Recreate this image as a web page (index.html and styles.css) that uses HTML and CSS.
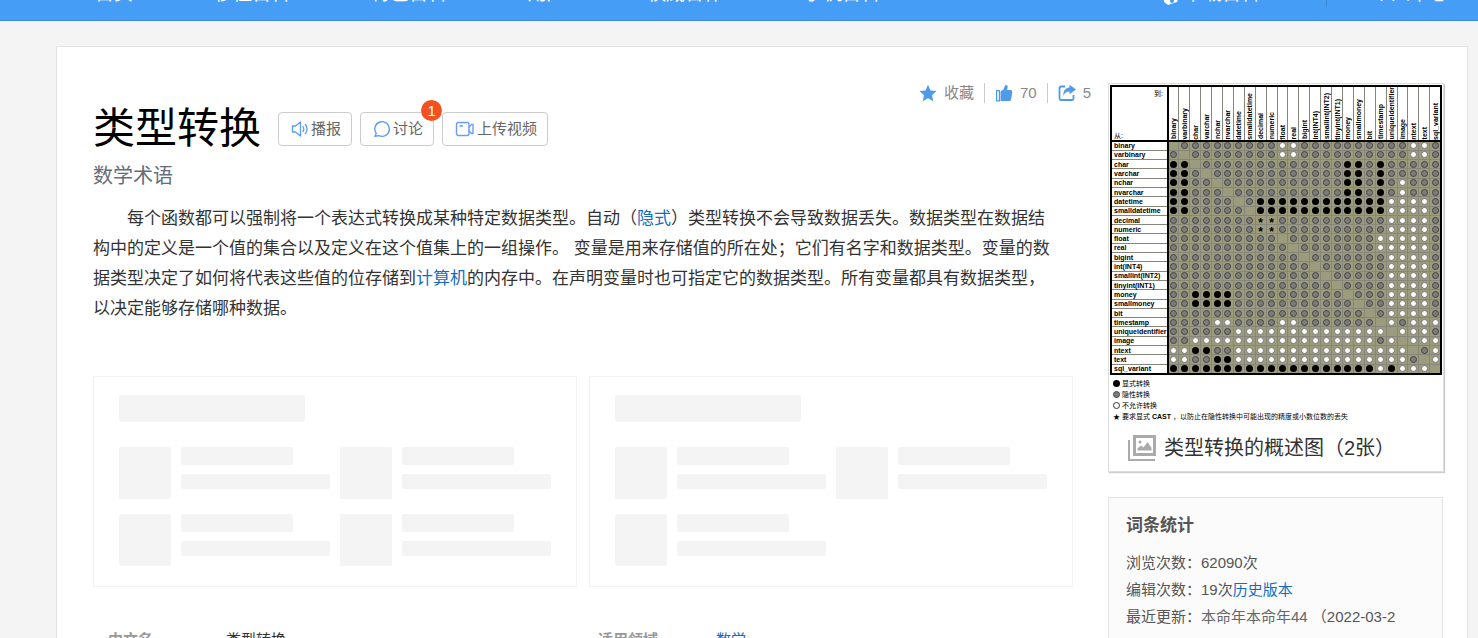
FILE: index.html
```
<!DOCTYPE html>
<html lang="zh-CN">
<head>
  <meta charset="UTF-8">
  <meta name="viewport" content="width=device-width, initial-scale=1.0">
  <title>类型转换</title>

<link rel="stylesheet" href="styles.css">
</head>
<body>

<header class="topbar">
  <nav class="topnav">
    <a href="#">首页</a>
    <a href="#">秒懂百科</a>
    <a href="#">特色百科</a>
    <a href="#">用户</a>
    <a href="#">权威合作</a>
    <a href="#">手机百科</a>
  </nav>
  <div class="topuser">
    <a href="#" class="download">
      <svg width="20" height="20" viewBox="0 0 20 20"><path d="M3 4l9-3 7 10-2 5-9 3-4-3z" fill="#fff"/><circle cx="12" cy="15" r="2" fill="#459df5"/></svg>下载百科</a>
    <a href="#" class="center">个人中心</a>
  </div>
</header>

<div class="page">
  <main class="main">
    <div class="head">
      <div class="title-row">
        <h1>类型转换</h1>
        <button class="btn" type="button">
          <svg width="18" height="18" viewBox="0 0 18 18" fill="none" stroke="#5b9cf8" stroke-width="1.3" stroke-linejoin="round" stroke-linecap="round"><path d="M1.5 6h3L9.500 2v14L4.500 12h-3z"/><path d="M12 6.500q1.600 2.500 0 5M14.500 4.500q3.200 4.500 0 9"/></svg>播报</button>
        <button class="btn" type="button">
          <svg width="18" height="18" viewBox="0 0 18 18" fill="none" stroke="#5b9cf8" stroke-width="1.4" stroke-linejoin="round" stroke-linecap="round"><path d="M2 16.300l1.200-3a7.300 7.300 0 1 1 2.800 2.300z"/></svg>讨论<span class="badge">1</span></button>
        <button class="btn" type="button">
          <svg width="20" height="18" viewBox="0 0 20 18" fill="none" stroke="#6a9dfa" stroke-width="1.4" stroke-linejoin="round" stroke-linecap="round"><rect x="1.500" y="2.500" width="12.500" height="13" rx="2"/><path d="M14 7l2.500-2.500H18v9h-1.500L14 11M5 6h2.500"/></svg>上传视频</button>
      </div>
      <div class="actions">
        <a href="#">
          <svg width="18" height="18" viewBox="0 0 18 18" fill="#4e9bea"><path d="M9 .8l2.500 5.600 6 .7-4.500 4.100 1.300 6L9 14.200l-5.300 3 1.300-6L.5 7.100l6-.7z"/></svg>收藏</a>
        <a href="#">
          <svg width="18" height="18" viewBox="0 0 18 18" fill="#4e9bea"><path d="M5.500 7.500L8.500 5.500 10 1.500q1-1.200 2.400 0 .8 1.500-.4 4.500h3.800q1.800.3 1.500 2l-1.200 7.500q-.5 1.500-2 1.500H5.500z"/><path d="M1.600 6.600h2.800v10.300H1.600z" fill="none" stroke="#4e9bea" stroke-width="1.200"/></svg>70</a>
        <a href="#">
          <svg width="18" height="18" viewBox="0 0 18 18"><path d="M7 2.500H3q-1.500 0-1.500 1.500v10.500q0 1.500 1.500 1.500h11q1.500 0 1.500-1.500V11" fill="none" stroke="#4e9bea" stroke-width="1.800"/><path d="M11.500.8L18 5.500l-6.500 4.800V7.500Q7 7.500 5 12q0-8 6.500-8.500z" fill="#4e9bea"/></svg>5</a>
      </div>
    </div>
    <div class="subtitle">数学术语</div>

    <p class="summary">每个函数都可以强制将一个表达式转换成某种特定数据类型。自动（<a href="#">隐式</a>）类型转换不会导致数据丢失。数据类型在数据结构中的定义是一个值的集合以及定义在这个值集上的一组操作。 变量是用来存储值的所在处；它们有名字和数据类型。变量的数据类型决定了如何将代表这些值的位存储到<a href="#">计算机</a>的内存中。在声明变量时也可指定它的数据类型。所有变量都具有数据类型，以决定能够存储哪种数据。</p>

    <div class="loading">
      <div class="skeleton">
        <div class="sk-title"></div>
        <div class="sk-list">
          <div class="sk-item"><i></i><b></b><b></b></div>
          <div class="sk-item"><i></i><b></b><b></b></div>
          <div class="sk-item"><i></i><b></b><b></b></div>
          <div class="sk-item"><i></i><b></b><b></b></div>
        </div>
      </div>
      <div class="skeleton">
        <div class="sk-title"></div>
        <div class="sk-list">
          <div class="sk-item"><i></i><b></b><b></b></div>
          <div class="sk-item"><i></i><b></b><b></b></div>
          <div class="sk-item"><i></i><b></b><b></b></div>
        </div>
      </div>
    </div>

    <div class="info">
      <dl><dt>中文名</dt><dd>类型转换</dd></dl>
      <dl><dt>适用领域</dt><dd><a href="#">数学</a></dd></dl>
    </div>
  </main>

  <aside class="side">
    <div class="album">
      <table class="matrix">
      <thead>
        <tr id="types">
          <th class="corner"><span class="to">到:</span><span>从:</span></th>
        </tr>
      </thead>
      <tbody id="tbody">
      </tbody>
      </table>
      <ul class="legend">
        <li><span class="dot k"></span>显式转换</li>
        <li><span class="dot g"></span>隐性转换</li>
        <li><span class="dot o"></span>不允许转换</li>
        <li><span class="mark">★</span>要求显式 <b>CAST</b>，以防止在隐性转换中可能出现的精度或小数位数的丢失</li>
      </ul>
      <a href="#" class="album-link">
        <svg width="28" height="26" viewBox="0 0 28 26" fill="none" stroke="#aaa" stroke-width="2"><path d="M1 5v20h26"/><rect x="6.500" y="1.500" width="20" height="18" stroke-width="3"/><path d="M9.500 15.500v-2l3.500-3 2.500 2 4-5.500 4 6v2.500z" fill="#aaa" stroke="none"/><circle cx="12" cy="7" r="1.500" fill="#aaa" stroke="none"/></svg>类型转换的概述图（2张）</a>
    </div>

    <div class="stats">
      <h2>词条统计</h2>
      <ul>
        <li>浏览次数：62090次</li>
        <li>编辑次数：19次<a href="#">历史版本</a></li>
        <li>最近更新：<span>本命年本命年44</span> （2022-03-2</li>
      </ul>
    </div>
  </aside>
</div>

<script src="matrix.js"></script>
</body>
</html>
```

FILE: styles.css
```
body {
  overflow: hidden;
  height: 100vh;

  font-size: 15px;
  font-family: 'Liberation Sans','Noto Sans CJK SC',sans-serif;
  color: #333;
  background-color: #f4f4f4;

  margin: 0px;
}

a { color: #136ec2; text-decoration: none; }
ul { list-style: none; margin: 0px; padding: 0px; }

/* Barra superior */
.topbar {
  display: flex;
  justify-content: space-between;
  align-items: flex-end;
  box-sizing: border-box;
  overflow: hidden;
  height: 21px;
  padding: 0px 30px 14px 95px;
  border-bottom: 1px solid #3d8ee0;
  background-color: #459df5;
}

.topbar a { color: #fff; font-size: 19px; line-height: 24px; white-space: nowrap; }

.topnav { display: flex; gap: 81px; }

.topuser { display: flex; align-items: flex-end; }
.topuser svg { margin-right: 4px; vertical-align: bottom; }
.download { padding-right: 66px; border-right: 1px solid #3a86d3; }
.center { padding-left: 45px; }

/* Página */
.page {
  display: grid;
  grid-template-columns: 1fr 336px;
  gap: 35px;
  margin: 25px 10px 0px 56px;
  padding: 36px 23px 40px 36px;
  border: 1px solid #e3e3e3;
  background-color: #fff;
}

.head { display: flex; justify-content: space-between; align-items: flex-start; margin-right: -18px; }

.title-row { display: flex; align-items: center; gap: 8px; padding-top: 16px; }

h1 {
  margin: 0px 9px 0px 0px;
  font-size: 42px;
  font-weight: 400;
  line-height: 60px;
  color: #000;
}

.btn {
  position: relative;
  display: flex;
  align-items: center;
  gap: 2px;
  height: 34px;
  padding: 0px 10px 0px 12px;
  border: 1px solid #ccc;
  border-radius: 4px;
  background-color: #fff;
  font: inherit;
  line-height: 20px;
  color: #666;
}

.badge {
  position: absolute;
  top: -13px;
  right: -9px;
  width: 21px;
  border-radius: 50%;
  background-color: #f4511e;
  color: #fff;
  line-height: 21px;
}

.actions { display: flex; line-height: 20px; }
.actions a { display: flex; align-items: center; gap: 7px; padding: 0px 10px; color: #888; }
.actions a + a { border-left: 1px solid #ccc; }
.actions a:last-child { padding-right: 0px; }

.subtitle { font-size: 20px; line-height: 34px; color: #666c78; }

.summary {
  margin: 11px 0px 0px;
  padding-right: 16px;
  font-size: 17px;
  line-height: 30px;
  text-indent: 2em;
}

.loading { display: grid; grid-template-columns: 1fr 1fr; gap: 12px; margin-top: 52px; }

.skeleton { padding: 18px 25px 20px; border: 1px solid #f3f3f3; }

.sk-title, .sk-item i, .sk-item b { border-radius: 2px; background-color: #f4f4f4; }
.sk-title { width: 186px; height: 27px; margin-bottom: 25px; }

.sk-list { display: grid; grid-template-columns: 211px 211px; gap: 15px 10px; }
.sk-item { display: grid; grid-template: 18px 15px / 52px 149px; gap: 9px 10px; height: 52px; }
.sk-item i { grid-row: 1 / 3; height: 52px; }
.sk-item b:nth-child(2) { width: 112px; }

.info { display: grid; grid-template-columns: 1fr 1fr; gap: 15px; padding: 40px 0px 0px 15px; line-height: 26px; }
.info dl { display: flex; margin: 0px; }
.info dt { width: 118px; font-weight: 700; color: #999; }
.info dd { margin: 0px; }

/* Álbum */
.album {
  padding: 1px 1px 8px;
  border: 1px solid #ddd;
  box-shadow: 1px 1px 1px #ccc;
}

.matrix {
  width: 100%;
  height: 290px;
  table-layout: fixed;
  border-collapse: collapse;
  border: 2px solid #000;
  font-size: 7px;
  line-height: 7px;
  color: #000;
}

.matrix th, .matrix td { padding: 0px; border: 1px solid #86867a; }
.matrix td { height: 8px; background-color: #9c9c7c; text-align: center; }
.matrix tbody th { padding-left: 2px; border-right: 2px solid #000; text-align: left; white-space: nowrap; }
.matrix thead th { border-bottom: 2px solid #000; vertical-align: bottom; }
.matrix thead th span { display: block; }

.matrix .corner { width: 51px; padding: 1px 2px; border-right: 2px solid #000; text-align: left; font-weight: 400; }
.matrix .corner .to { padding: 0px 2px 35px; text-align: right; }
.matrix .name { margin: 0px auto; writing-mode: vertical-rl; transform: rotate(180deg); white-space: nowrap; }

.dot { display: block; box-sizing: border-box; width: 7px; height: 7px; margin: 0px auto; border-radius: 50%; }
.k { background-color: #000; }
.g { border: 1px solid #444; background-color: #7c7c7c; }
.w { border: 1px solid #777; background-color: #fff; }
.o { border: 1px solid #333; }
.star { display: block; height: 7px; font-size: 12px; line-height: 12px; font-weight: 700; }

.legend { padding: 3px 3px 0px; font-size: 7px; line-height: 11px; color: #000; }
.legend li { display: flex; align-items: center; gap: 2px; white-space: nowrap; }
.legend .dot { margin: 0px; }

.album-link {
  display: flex;
  align-items: center;
  gap: 8px;
  padding: 11px 18px 0px;
  font-size: 20px;
  line-height: 30px;
  color: #333;
  white-space: nowrap;
}

/* Estatísticas */
.stats {
  margin: 25px 1px 0px 0px;
  padding: 14px 17px 40px;
  border: 1px solid #e3e3e3;
  background-color: #fbfbfb;
  color: #555;
}

.stats h2 { margin: 0px 0px 10px; font-size: 17px; line-height: 27px; }
.stats li { line-height: 27px; white-space: nowrap; }
.stats li span { color: #666; }
```

FILE: matrix.js
```
// k = explícita, g = implícita, w = não permitida, s = exige CAST
const tipos = [
  ['binary',           '.gggggggggwwggggggggggwwg'],
  ['varbinary',        'g.ggggggggwwggggggggggwwg'],
  ['char',             'kk.gggggggggggggkkgkggggg'],
  ['varchar',          'kkg.ggggggggggggkkgkggggg'],
  ['nchar',            'kkgg.gggggggggggkkgkgwggg'],
  ['nvarchar',         'kkggg.ggggggggggkkgkgwggg'],
  ['datetime',         'kkgggg.gkkkkkkkkkkkkwwwwg'],
  ['smalldatetime',    'kkggggg.kkkkkkkkkkkkwwwwg'],
  ['decimal',          'ggggggggssggggggggggwwwwg'],
  ['numeric',          'ggggggggssggggggggggwwwwg'],
  ['float',            'gggggggggg.ggggggggwwwwwg'],
  ['real',             'ggggggggggg.gggggggwwwwwg'],
  ['bigint',           'gggggggggggg.gggggggwwwwg'],
  ['int(INT4)',        'ggggggggggggg.ggggggwwwwg'],
  ['smallint(INT2)',   'gggggggggggggg.gggggwwwwg'],
  ['tinyint(INT1)',    'ggggggggggggggg.ggggwwwwg'],
  ['money',            'ggkkkkgggggggggg.gggwwwwg'],
  ['smallmoney',       'ggkkkkggggggggggg.ggwwwwg'],
  ['bit',              'gggggggggggggggggg.gwwwwg'],
  ['timestamp',        'ggggwwggggwwggggggg.wgwww'],
  ['uniqueidentifier', 'ggggggwwwwwwwwwwwwww.wwwg'],
  ['image',            'ggwwwwwwwwwwwwwwwwwgw.www'],
  ['ntext',            'wwkkggwwwwwwwwwwwwwwww.gw'],
  ['text',             'wwggkkwwwwwwwwwwwwwwwwg.w'],
  ['sql_variant',      'kkkkkkkkkkkkkkkkkkkwkwww.']
];

for (const [nome, linha] of tipos) {
  const th = document.createElement('th');
  th.innerHTML = '<span class="name">' + nome + '</span>';
  document.getElementById('types').appendChild(th);

  const row = document.createElement('tr');
  row.innerHTML = '<th>' + nome + '</th>';

  for (const c of linha) {
    const cell = document.createElement('td');
    if (c === 's') cell.innerHTML = '<span class="star">*</span>';
    else if (c !== '.') cell.innerHTML = '<span class="dot ' + c + '"></span>';
    row.appendChild(cell);
  }

  document.getElementById('tbody').appendChild(row);
}
```
